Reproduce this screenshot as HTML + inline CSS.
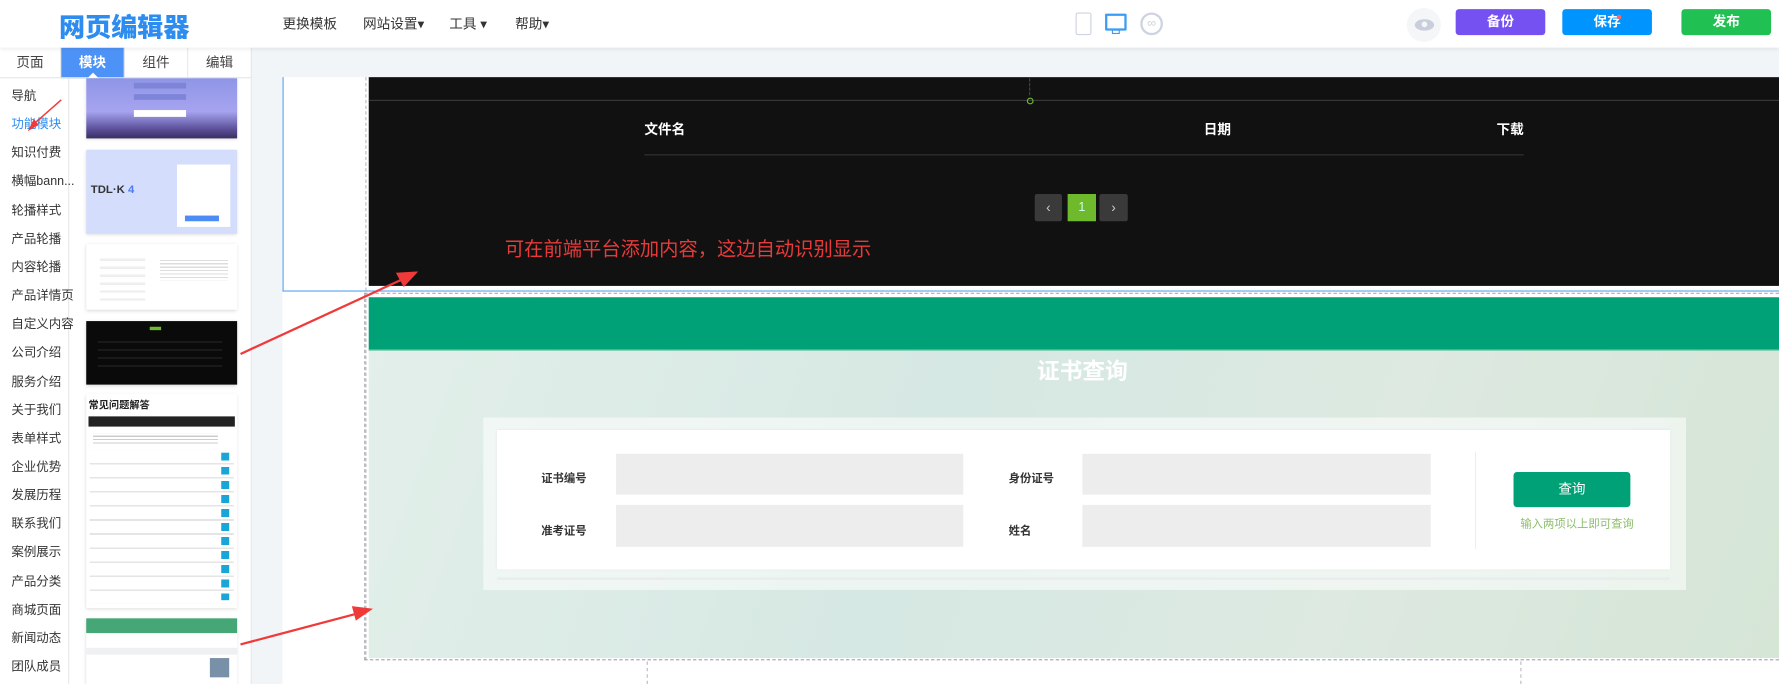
<!DOCTYPE html>
<html><head><meta charset="utf-8"><style>
*{margin:0;padding:0;box-sizing:border-box}
html,body{width:1779px;height:684px;overflow:hidden;background:#f2f5f8}
#s{position:absolute;left:0;top:0;width:1568px;height:603px;transform:scale(1.13457);transform-origin:0 0;font-family:"Liberation Sans","Noto Sans CJK SC",sans-serif;background:#f2f5f8}
.a{position:absolute}
.hdr{left:0;top:0;width:1568px;height:42px;background:#fff;box-shadow:0 1px 4px rgba(0,0,0,.08);z-index:5}
.menu{font-size:12px;color:#333;top:12px}
.btn{top:8px;height:23px;border-radius:3px;color:#fff;font-size:12px;font-weight:bold;text-align:center;line-height:23px;width:79px}
.tab{top:42px;height:27px;width:56px;text-align:center;line-height:27px;font-size:12px;color:#444;background:#fff;border-right:1px solid #e6e6e6;border-bottom:1px solid #e6e6e6}
.cat{left:10px;font-size:11px;color:#333}
.th{left:76px;width:133px;box-shadow:0 1px 3px rgba(0,0,0,.15)}
.lbl{font-size:10px;color:#333;font-weight:bold}
.inp{background:#ededed;height:36px;width:306px}
</style></head><body><div id="s">
<div class="a hdr">
 <div class="a" style="left:52px;top:5px;font-size:23px;font-weight:900;color:#2d8cf0;letter-spacing:0px">网页编辑器</div>
 <div class="a menu" style="left:249px">更换模板</div>
 <div class="a menu" style="left:320px">网站设置▾</div>
 <div class="a menu" style="left:396px">工具 ▾</div>
 <div class="a menu" style="left:454px">帮助▾</div>
 <div class="a" style="left:948px;top:11px;width:14px;height:20px;border:1.5px solid #cdd3e0;border-radius:2px"></div>
 <div class="a" style="left:974px;top:12px;width:19px;height:15px;border:2px solid #3a9cf5;border-radius:1px"></div>
 <div class="a" style="left:980px;top:26px;width:7px;height:4px;border:1.5px solid #3a9cf5"></div>
 <div class="a" style="left:1005px;top:11px;width:20px;height:20px;border:2px solid #cdd3e0;border-radius:50%;color:#cdd3e0;font-size:11px;text-align:center;line-height:16px">∞</div>
 <div class="a" style="left:1240px;top:7px;width:30px;height:30px;border-radius:50%;background:#f5f6f8"></div>
 <div class="a" style="left:1247px;top:17px;width:17px;height:10px;border-radius:50%;background:#c8cedc"></div>
 <div class="a" style="left:1253px;top:19px;width:5px;height:5px;border-radius:50%;background:#f5f6f8"></div>
 <div class="a btn" style="left:1283px;background:#7651f2">备份</div>
 <div class="a btn" style="left:1377px;background:#0094ff">保存</div>
 <div class="a" style="left:1425px;top:13px;width:4px;height:4px;background:#f66;border-radius:50%"></div>
 <div class="a btn" style="left:1482px;background:#21c052">发布</div>
</div>
<div class="a" style="left:0;top:42px;width:222px;height:561px;background:#fff;border-right:1px solid #e4e7ec"></div>
<div class="a tab" style="left:0;width:54px">页面</div>
<div class="a tab" style="left:54px;background:#4d93f7;color:#fff;font-weight:bold">模块</div>
<div class="a" style="left:77px;top:64px;border:5px solid transparent;border-bottom-color:#fff;border-top:0"></div>
<div class="a tab" style="left:110px">组件</div>
<div class="a tab" style="left:166px">编辑</div>
<div class="a" style="left:60px;top:69px;width:1px;height:534px;background:#e8e8e8"></div>
<div class="a cat" style="top:76px">导航</div>
<div class="a cat" style="top:101px;color:#2d8cf0">功能模块</div>
<div class="a cat" style="top:126px">知识付费</div>
<div class="a cat" style="top:151px">横幅bann...</div>
<div class="a cat" style="top:177px">轮播样式</div>
<div class="a cat" style="top:202px">产品轮播</div>
<div class="a cat" style="top:227px">内容轮播</div>
<div class="a cat" style="top:252px">产品详情页</div>
<div class="a cat" style="top:277px">自定义内容</div>
<div class="a cat" style="top:302px">公司介绍</div>
<div class="a cat" style="top:328px">服务介绍</div>
<div class="a cat" style="top:353px">关于我们</div>
<div class="a cat" style="top:378px">表单样式</div>
<div class="a cat" style="top:403px">企业优势</div>
<div class="a cat" style="top:428px">发展历程</div>
<div class="a cat" style="top:453px">联系我们</div>
<div class="a cat" style="top:478px">案例展示</div>
<div class="a cat" style="top:504px">产品分类</div>
<div class="a cat" style="top:529px">商城页面</div>
<div class="a cat" style="top:554px">新闻动态</div>
<div class="a cat" style="top:579px">团队成员</div>
<div class="a th" style="top:69px;height:53px;background:linear-gradient(#8f95e6,#a6a4f0 55%,#5a4f98 85%,#3a2f60)"><div class="a" style="left:42px;top:4px;width:46px;height:5px;background:#7e84d8"></div><div class="a" style="left:42px;top:14px;width:46px;height:5px;background:#7e84d8"></div><div class="a" style="left:42px;top:28px;width:46px;height:6px;background:#fff"></div></div>
<div class="a th" style="top:132px;height:74px;background:#d4ddfb"><div class="a" style="left:80px;top:13px;width:47px;height:55px;background:#fff"></div><div class="a" style="left:4px;top:30px;font-size:10px;font-weight:bold;color:#333">TDL·K <span style="color:#4d7af0">4</span></div><div class="a" style="left:87px;top:58px;width:30px;height:5px;background:#4d8cf5"></div></div>
<div class="a th" style="top:215px;height:58px;background:#fff"><div class="a" style="left:12px;top:8px;width:40px;height:45px;background:repeating-linear-gradient(#fff 0,#fff 5px,#eee 5px,#eee 7px)"></div><div class="a" style="left:65px;top:12px;width:60px;height:20px;background:repeating-linear-gradient(#fff 0,#fff 2px,#ddd 2px,#ddd 3px)"></div></div>
<div class="a th" style="top:283px;height:56px;background:#0a0a0a"><div class="a" style="left:56px;top:5px;width:10px;height:3px;background:#6fba2c"></div><div class="a" style="left:10px;top:12px;width:110px;height:30px;background:repeating-linear-gradient(#0a0a0a 0,#0a0a0a 6px,#2a2a2a 6px,#2a2a2a 7px)"></div></div>
<div class="a th" style="top:347px;height:189px;background:#fff">
 <div class="a" style="left:2px;top:3px;font-size:9px;font-weight:bold;color:#222">常见问题解答</div>
 <div class="a" style="left:2px;top:20px;width:129px;height:9px;background:#222"></div>
 <div class="a" style="left:6px;top:35px;width:110px;height:10px;background:repeating-linear-gradient(#fff 0,#fff 2px,#ccc 2px,#ccc 3px)"></div>
 <div class="a" style="left:3px;top:50px;width:127px;height:135px;background:repeating-linear-gradient(#fff 0,#fff 11px,#e5e5e5 11px,#e5e5e5 12.4px)"></div>
 <div class="a" style="left:119px;top:52px;width:7px;height:130px;background:repeating-linear-gradient(#19a6d6 0,#19a6d6 7px,transparent 7px,transparent 12.4px)"></div>
</div>
<div class="a th" style="top:545px;height:58px;background:#fff"><div class="a" style="left:0;top:0;width:133px;height:13px;background:#45a775"></div><div class="a" style="left:0;top:26px;width:133px;height:6px;background:#eef0f2"></div><div class="a" style="left:109px;top:35px;width:17px;height:17px;background:#7890a8"></div></div>
<div class="a" style="left:249px;top:68px;width:1319px;height:535px;background:#fff"></div>
<div class="a" style="left:249px;top:68px;width:1px;height:189px;background:#5aa5f5"></div>
<div class="a" style="left:249px;top:256px;width:1319px;height:1px;background:#5aa5f5"></div>
<div class="a" style="left:322px;top:68px;width:1px;height:514px;border-left:1px dashed #bbb"></div>
<div class="a" style="left:325px;top:68px;width:1243px;height:184px;background:#111"></div>
<div class="a" style="left:325px;top:88px;width:1243px;height:1px;background:#3a3a3a"></div>
<div class="a" style="left:907px;top:69px;width:1px;height:15px;border-left:1px dashed #444"></div>
<div class="a" style="left:905px;top:86px;width:6px;height:6px;border:1px solid #6fba2c;border-radius:50%"></div>
<div class="a" style="left:568px;top:105px;font-size:12px;font-weight:bold;color:#fff">文件名</div>
<div class="a" style="left:1061px;top:105px;font-size:12px;font-weight:bold;color:#fff">日期</div>
<div class="a" style="left:1319px;top:105px;font-size:12px;font-weight:bold;color:#fff">下载</div>
<div class="a" style="left:568px;top:136px;width:775px;height:1px;background:#333"></div>
<div class="a" style="left:912px;top:171px;width:24px;height:24px;background:#3a3a3a;color:#ccc;text-align:center;line-height:24px;font-size:12px;border-radius:2px">‹</div>
<div class="a" style="left:941px;top:171px;width:25px;height:24px;background:#6fba2c;color:#cfe;text-align:center;line-height:24px;font-size:11px">1</div>
<div class="a" style="left:969px;top:171px;width:25px;height:24px;background:#3a3a3a;color:#ccc;text-align:center;line-height:24px;font-size:12px;border-radius:2px">›</div>
<div class="a" style="left:445px;top:205px;font-size:17px;color:#e83a3a">可在前端平台添加内容，这边自动识别显示</div>
<div class="a" style="left:321px;top:258px;width:1247px;height:324px;border:1px dashed #aab;border-right:0"></div>
<div class="a" style="left:325px;top:262px;width:1243px;height:318px;background:linear-gradient(110deg,#e3efea,#d6e8e3 40%,#dde9e1 70%,#d5e5d6)"></div>
<div class="a" style="left:325px;top:262px;width:1243px;height:47px;background:#00a176"></div>
<div class="a" style="left:325px;top:308px;width:1243px;height:1px;background:#6cc7a6"></div>
<div class="a" style="left:914px;top:311px;font-size:20px;font-weight:bold;color:#fff">证书查询</div>
<div class="a" style="left:426px;top:368px;width:1060px;height:152px;background:rgba(255,255,255,.55)"></div>
<div class="a" style="left:438px;top:379px;width:1034px;height:123px;background:#fff;box-shadow:0 0 2px rgba(0,0,0,.08)"></div>
<div class="a" style="left:438px;top:509px;width:1034px;height:2px;background:#e8ecea"></div>
<div class="a lbl" style="left:477px;top:413px">证书编号</div>
<div class="a inp" style="left:543px;top:400px"></div>
<div class="a lbl" style="left:889px;top:413px">身份证号</div>
<div class="a inp" style="left:954px;top:400px;width:307px"></div>
<div class="a lbl" style="left:477px;top:459px">准考证号</div>
<div class="a inp" style="left:543px;top:445px;height:37px"></div>
<div class="a lbl" style="left:889px;top:459px">姓名</div>
<div class="a inp" style="left:954px;top:445px;width:307px;height:37px"></div>
<div class="a" style="left:1300px;top:398px;width:1px;height:86px;background:#eee"></div>
<div class="a" style="left:1334px;top:416px;width:103px;height:31px;background:#00a176;border-radius:3px;color:#fff;font-size:12px;text-align:center;line-height:31px">查询</div>
<div class="a" style="left:1340px;top:453px;font-size:10px;color:#8dbd6d">输入两项以上即可查询</div>
<div class="a" style="left:570px;top:583px;width:1px;height:20px;border-left:1px dashed #bbb"></div>
<div class="a" style="left:1340px;top:583px;width:1px;height:20px;border-left:1px dashed #bbb"></div>
<svg class="a" style="left:0;top:0" width="1568" height="603">
<g stroke="#f03a3a" stroke-width="1.3" fill="#f03a3a">
<line x1="54" y1="88" x2="29" y2="110"/><polygon points="26,114 30,106 33,110"/>
<line x1="212" y1="312" x2="355" y2="246" stroke-width="2"/><polygon points="367,240 350,241 356,252"/>
<line x1="212" y1="568" x2="314" y2="541" stroke-width="2"/><polygon points="327,537 311,535 314,546"/>
</g></svg>
</div></body></html>
